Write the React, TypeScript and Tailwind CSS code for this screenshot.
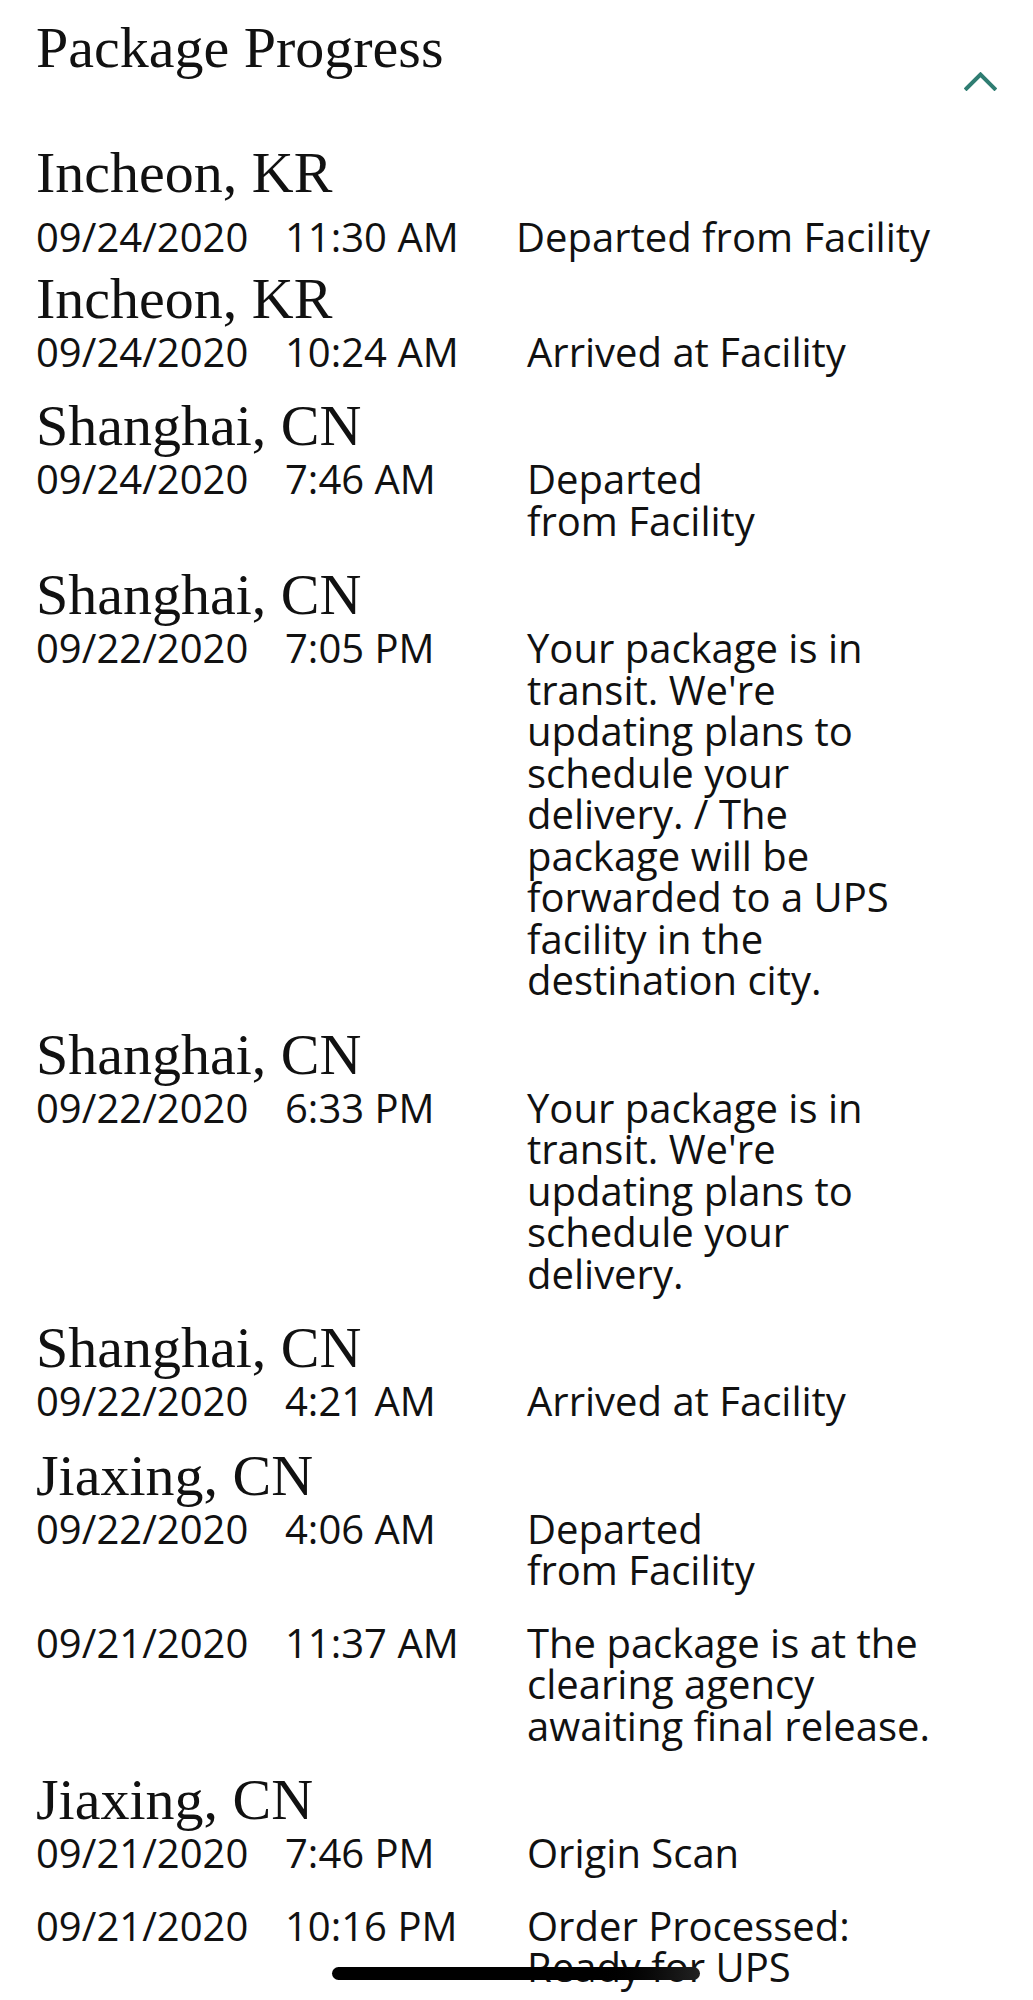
import React from 'react';

type Scan = {
  city?: string;
  date: string;
  time: string;
  lines: string[];
};

const scans: Scan[] = [
  { city: 'Incheon, KR', date: '09/24/2020', time: '11:30 AM', lines: ['Departed from Facility'] },
  { city: 'Incheon, KR', date: '09/24/2020', time: '10:24 AM', lines: ['Arrived at Facility'] },
  { city: 'Shanghai, CN', date: '09/24/2020', time: '7:46 AM', lines: ['Departed', 'from Facility'] },
  {
    city: 'Shanghai, CN',
    date: '09/22/2020',
    time: '7:05 PM',
    lines: [
      'Your package is in',
      "transit. We're",
      'updating plans to',
      'schedule your',
      'delivery. / The',
      'package will be',
      'forwarded to a UPS',
      'facility in the',
      'destination city.',
    ],
  },
  {
    city: 'Shanghai, CN',
    date: '09/22/2020',
    time: '6:33 PM',
    lines: ['Your package is in', "transit. We're", 'updating plans to', 'schedule your', 'delivery.'],
  },
  { city: 'Shanghai, CN', date: '09/22/2020', time: '4:21 AM', lines: ['Arrived at Facility'] },
  { city: 'Jiaxing, CN', date: '09/22/2020', time: '4:06 AM', lines: ['Departed', 'from Facility'] },
  {
    date: '09/21/2020',
    time: '11:37 AM',
    lines: ['The package is at the', 'clearing agency', 'awaiting final release.'],
  },
  { city: 'Jiaxing, CN', date: '09/21/2020', time: '7:46 PM', lines: ['Origin Scan'] },
  { date: '09/21/2020', time: '10:16 PM', lines: ['Order Processed:', 'Ready for UPS'] },
];

function ScanRow({ scan, index }: { scan: Scan; index: number }) {
  const first = index === 0;
  // the first two scans sit tighter together than the rest
  const spacing = first ? 'mt-[53px]' : index === 1 ? 'mt-[12px]' : scan.city ? 'mt-[25px]' : 'mt-[31px]';
  return (
    <div className={spacing}>
      {scan.city && (
        <h3 className="font-['Liberation_Serif',serif] text-[58px] leading-none text-[#111]">{scan.city}</h3>
      )}
      <div
        className={`grid text-[40px] leading-[41.5px] text-[#111] ${
          first ? 'mt-[14px] grid-cols-[249px_231px_1fr]' : scan.city ? 'mt-[3px] grid-cols-[249px_242px_1fr]' : 'grid-cols-[249px_242px_1fr]'
        }`}
      >
        <span>{scan.date}</span>
        <span>{scan.time}</span>
        <div className="flex flex-col">
          {scan.lines.map((line, i) => (
            <span key={i} className="whitespace-nowrap">
              {line}
            </span>
          ))}
        </div>
      </div>
    </div>
  );
}

export default function App() {
  return (
    <div className="relative min-h-[2000px] w-full overflow-hidden bg-white pl-[36px] pr-[36px] pt-[19px] font-['Open_Sans',sans-serif]">
      <div className="flex items-start justify-between">
        <h2 className="font-['Liberation_Serif',serif] text-[58px] leading-none text-[#111]">Package Progress</h2>
        <button className="mt-[53px]" aria-label="Collapse">
          <svg width="33" height="19" viewBox="0 0 33 19" fill="none">
            <polyline
              points="2.5,16.5 16.5,2.5 30.5,16.5"
              stroke="#2f7d72"
              strokeWidth="4"
              strokeLinecap="square"
              strokeLinejoin="miter"
            />
          </svg>
        </button>
      </div>

      <div className="flex flex-col">
        {scans.map((scan, i) => (
          <ScanRow key={i} scan={scan} index={i} />
        ))}
      </div>

      {/* iOS home indicator */}
      <div className="absolute left-[332px] top-[1967px] h-[13px] w-[368px] rounded-full bg-gradient-to-r from-black from-70% to-[#222]" />
    </div>
  );
}
